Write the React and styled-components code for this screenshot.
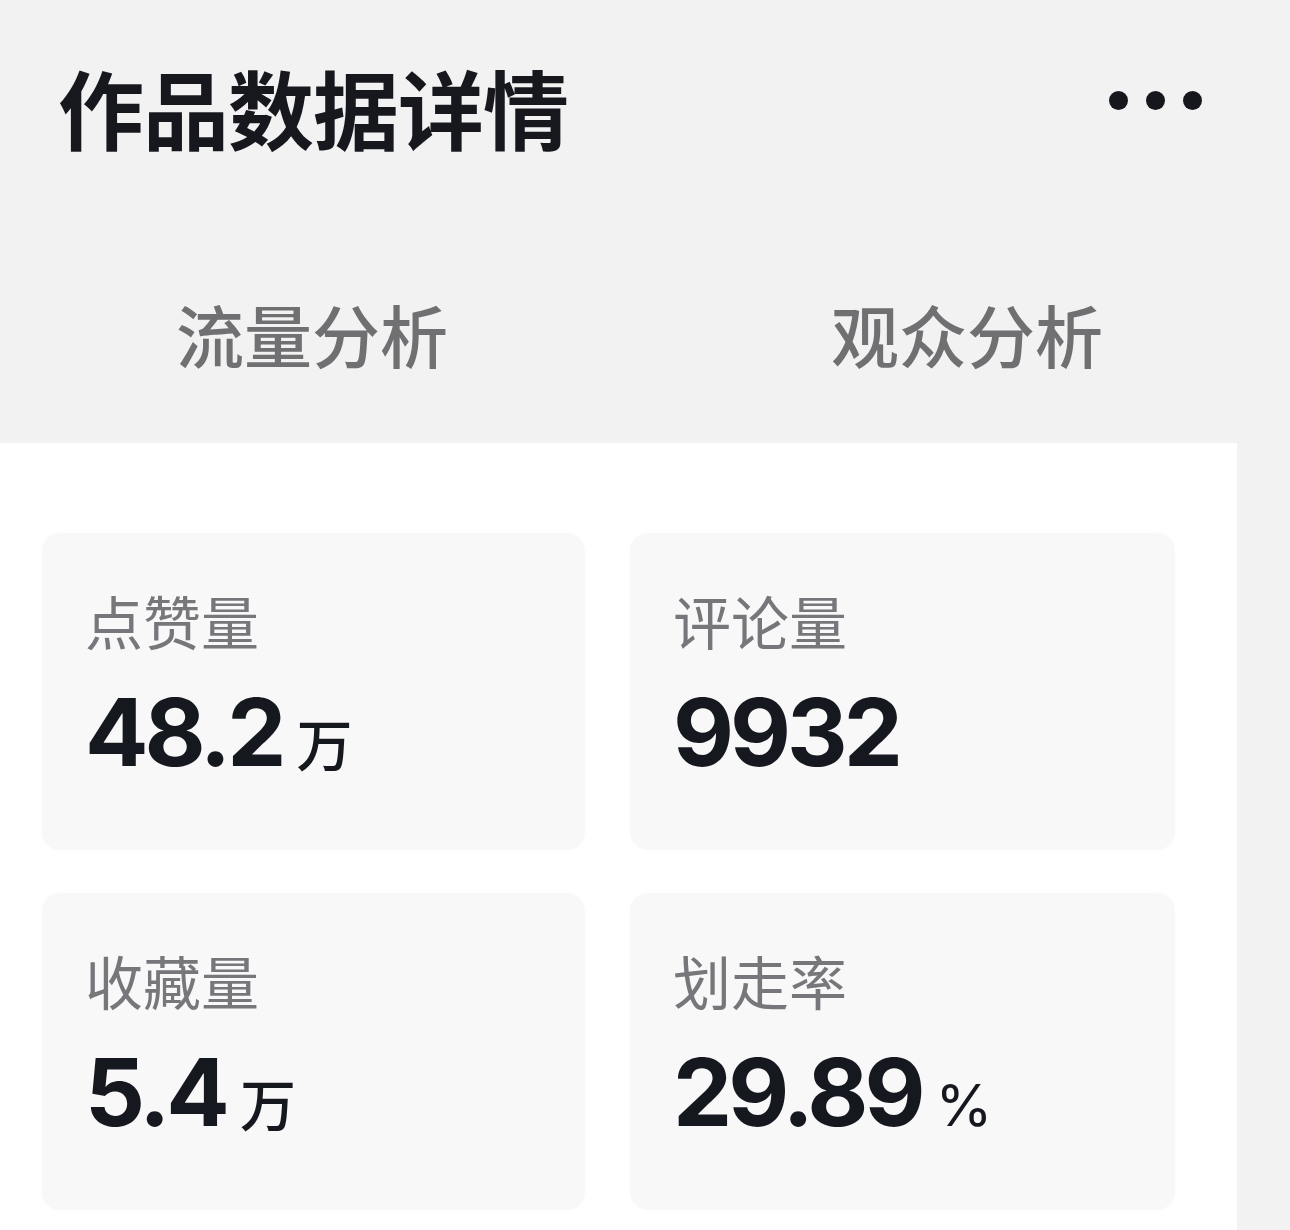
import React from "react"
import styled, { createGlobalStyle } from "styled-components"

const GlobalStyle = createGlobalStyle`
  body {
    margin: 0;
    background: #f2f2f3;
    font-family: "Noto Sans CJK SC", "Noto Sans", sans-serif;
  }
`

const Page = styled.div`
  width: 1290px;
  min-height: 1230px;
  background: #f2f2f3;
  display: flex;
  flex-direction: column;
`

const TopBar = styled.div`
  display: flex;
  justify-content: space-between;
  align-items: flex-start;
  padding: 64px 88px 0 58px;
  height: 98px;
`

const Title = styled.h1`
  margin: 0;
  font-size: 86px;
  line-height: 1;
  font-weight: 700;
  color: #17181e;
  letter-spacing: -1px;
`

const MoreButton = styled.div`
  display: flex;
  gap: 18px;
  margin-top: 27px;
  & span {
    width: 19px;
    height: 19px;
    border-radius: 50%;
    background: #16171d;
  }
`

const Tabs = styled.div`
  display: grid;
  grid-template-columns: 624px 624px;
  column-gap: 31px;
  margin-top: 138px;
  height: 143px;
`

const Tab = styled.div`
  text-align: center;
  font-size: 68px;
  line-height: 1;
  font-weight: 500;
  color: ${(p) => (p.active ? "#16171d" : "#707073")};
`

const Body = styled.div`
  display: flex;
  flex: 1;
`

const Panel = styled.div`
  width: 1237px;
  background: #ffffff;
  box-sizing: border-box;
  padding: 90px 62px 20px 42px;
`

const Grid = styled.div`
  display: grid;
  grid-template-columns: 543px 545px;
  column-gap: 45px;
  row-gap: 43px;
`

const Card = styled.div`
  height: 317px;
  box-sizing: border-box;
  background: #f8f8f9;
  border-radius: 18px;
  box-shadow: 0 0 6px rgba(0, 0, 0, 0.015);
  padding: 58px 43px 0;
  display: flex;
  flex-direction: column;
`

const Label = styled.div`
  font-size: 58px;
  line-height: 1;
  font-weight: 400;
  color: #77777b;
`

const Value = styled.div`
  margin-top: 36px;
  display: flex;
  align-items: baseline;
  color: #16181f;
  font-family: Inter, "Noto Sans", "Noto Sans CJK SC", sans-serif;
  font-weight: 700;
  font-size: 94px;
  line-height: 1;
  letter-spacing: -4px;
`

const Unit = styled.span`
  font-family: ${(p) =>
    p.small ? "Inter, sans-serif" : '"Noto Sans CJK SC", sans-serif'};
  font-size: ${(p) => (p.small ? "58px" : "56px")};
  font-weight: ${(p) => (p.small ? 400 : 500)};
  letter-spacing: 0;
  margin-left: 14px;
`

const Gutter = styled.div`
  flex: 1;
  background: #f2f2f3;
`

const stats = [
  { label: "点赞量", value: "48.2", unit: "万" },
  { label: "评论量", value: "9932" },
  { label: "收藏量", value: "5.4", unit: "万" },
  { label: "划走率", value: "29.89", unit: "%", small: true },
]

export default function App() {
  return (
    <Page>
      <GlobalStyle />
      <TopBar>
        <Title>作品数据详情</Title>
        <MoreButton>
          <span />
          <span />
          <span />
        </MoreButton>
      </TopBar>
      <Tabs>
        <Tab>流量分析</Tab>
        <Tab>观众分析</Tab>
      </Tabs>
      <Body>
        <Panel>
          <Grid>
            {stats.map((s) => (
              <Card key={s.label}>
                <Label>{s.label}</Label>
                <Value>
                  {s.value}
                  {s.unit && <Unit small={s.small}>{s.unit}</Unit>}
                </Value>
              </Card>
            ))}
          </Grid>
        </Panel>
        <Gutter />
      </Body>
    </Page>
  )
}
